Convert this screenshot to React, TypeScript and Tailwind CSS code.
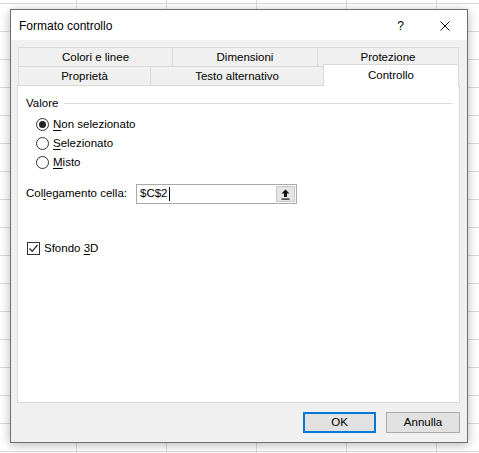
import React from 'react';

const font = { fontFamily: '"Liberation Sans", Arial, sans-serif' };

function Radio({ checked, label, accessKey }: { checked?: boolean; label: string; accessKey: number }) {
  return (
    <div className="flex h-[19px] items-center pl-[18px]">
      <div className="flex h-[13px] w-[13px] items-center justify-center rounded-full border border-[#333333] bg-white">
        {checked && <div className="h-[7px] w-[7px] rounded-full bg-[#222222]" />}
      </div>
      <span className="ml-[4px]">
        {label.slice(0, accessKey)}
        <span className="underline underline-offset-2">{label[accessKey]}</span>
        {label.slice(accessKey + 1)}
      </span>
    </div>
  );
}

export default function App() {
  const backTabs = [
    { label: 'Colori e linee', width: 'w-[154px]' },
    { label: 'Dimensioni', width: 'w-[145px]' },
    { label: 'Protezione', width: 'w-[142px]' },
  ];

  return (
    <div
      className="min-h-[453px] w-full bg-white bg-[linear-gradient(to_right,#dadada_1px,transparent_1px),linear-gradient(to_bottom,#dadada_1px,transparent_1px)] bg-[size:90px_28px] bg-[position:76px_3px] pl-[10px] pt-[9px] text-[11.5px] text-black"
      style={font}
    >
      <div className="flex h-[434px] w-[458px] flex-col border border-[#6e6e6e] bg-[#f0f0f0] shadow-[0_2px_10px_rgba(0,0,0,0.28)]">
        {/* title bar */}
        <div className="flex h-[30px] items-center bg-white pl-[8px] pt-[1px]">
          <span className="text-[12px]">Formato controllo</span>
          <span className="ml-auto mr-[36px] text-[12px]">?</span>
          <svg width="10" height="10" viewBox="0 0 10 10" className="mr-[17px]">
            <path d="M0.5 0.5 L9.5 9.5 M9.5 0.5 L0.5 9.5" stroke="#111" strokeWidth="1" />
          </svg>
        </div>

        <div className="flex flex-1 flex-col pl-[6px] pr-[7px] pt-[7px]">
          {/* tabs */}
          <div className="ml-[1px] w-[441px]">
            <div className="flex h-[19px]">
              {backTabs.map((tab, i) => (
                <div
                  key={tab.label}
                  className={`${tab.width} flex items-center justify-center border-l border-t border-[#d9d9d9] pt-[1px] ${i === backTabs.length - 1 ? 'border-r' : ''}`}
                >
                  {tab.label}
                </div>
              ))}
            </div>
            <div className="flex h-[19px] items-start">
              <div className="flex h-[19px] w-[132px] items-center justify-center border-l border-t border-[#d9d9d9] pt-[1px]">
                Proprietà
              </div>
              <div className="flex h-[19px] w-[173px] items-center justify-center border-l border-t border-[#d9d9d9] pt-[1px]">
                Testo alternativo
              </div>
              <div className="relative z-10 -mt-[2px] flex h-[22px] w-[136px] items-center justify-center border-l border-r border-t border-[#d9d9d9] bg-white">
                Controllo
              </div>
            </div>
          </div>

          {/* panel */}
          <div className="flex h-[318px] w-[443px] flex-col border border-[#d9d9d9] bg-white pt-[8px]">
            <div className="flex h-[19px] items-center pl-[8px] pr-[6px]">
              <span>Valore</span>
              <div className="ml-[6px] h-px flex-1 bg-[#dcdcdc]" />
            </div>
            <div className="mt-[2px]">
              <Radio checked label="Non selezionato" accessKey={0} />
              <Radio label="Selezionato" accessKey={0} />
              <Radio label="Misto" accessKey={0} />
            </div>

            <div className="mt-[12px] flex h-[20px] items-center pl-[8px]">
              <span className="w-[110px]">
                Col<span className="underline underline-offset-2">l</span>egamento cella:
              </span>
              <div className="flex h-[20px] w-[161px] items-center border border-[#a9a9a9] bg-white">
                <span className="pl-[3px]">$C$2</span>
                <div className="ml-[1px] h-[14px] w-px bg-black" />
                <div className="ml-auto mr-[1px] flex h-[16px] w-[19px] items-center justify-center border border-[#c8c8c8] bg-[#e5e5e5]">
                  <svg width="9" height="11" viewBox="0 0 9 11">
                    <path d="M4.5 0.5 L8.5 4.5 L6 4.5 L6 8 L3 8 L3 4.5 L0.5 4.5 Z" fill="#111" />
                    <rect x="0.5" y="9.5" width="8" height="1.2" fill="#111" />
                  </svg>
                </div>
              </div>
            </div>

            <div className="mt-[35px] flex h-[19px] items-center pl-[9px]">
              <div className="flex h-[13px] w-[13px] items-center justify-center border border-[#333333] bg-white">
                <svg width="11" height="11" viewBox="0 0 11 11">
                  <path d="M1.5 5.5 L4.2 8.3 L9.5 2" stroke="#222" strokeWidth="1.2" fill="none" />
                </svg>
              </div>
              <span className="ml-[4px]">
                Sfondo <span className="underline underline-offset-2">3</span>D
              </span>
            </div>
          </div>

          {/* footer */}
          <div className="mt-[9px] flex justify-end gap-[10px]">
            <button className="flex h-[21px] w-[73px] items-center justify-center border-2 border-[#0078d7] bg-[#e1e1e1] text-[11.5px]">
              OK
            </button>
            <button className="flex h-[21px] w-[74px] items-center justify-center border border-[#adadad] bg-[#e1e1e1] text-[11.5px]">
              Annulla
            </button>
          </div>
        </div>
      </div>
    </div>
  );
}
